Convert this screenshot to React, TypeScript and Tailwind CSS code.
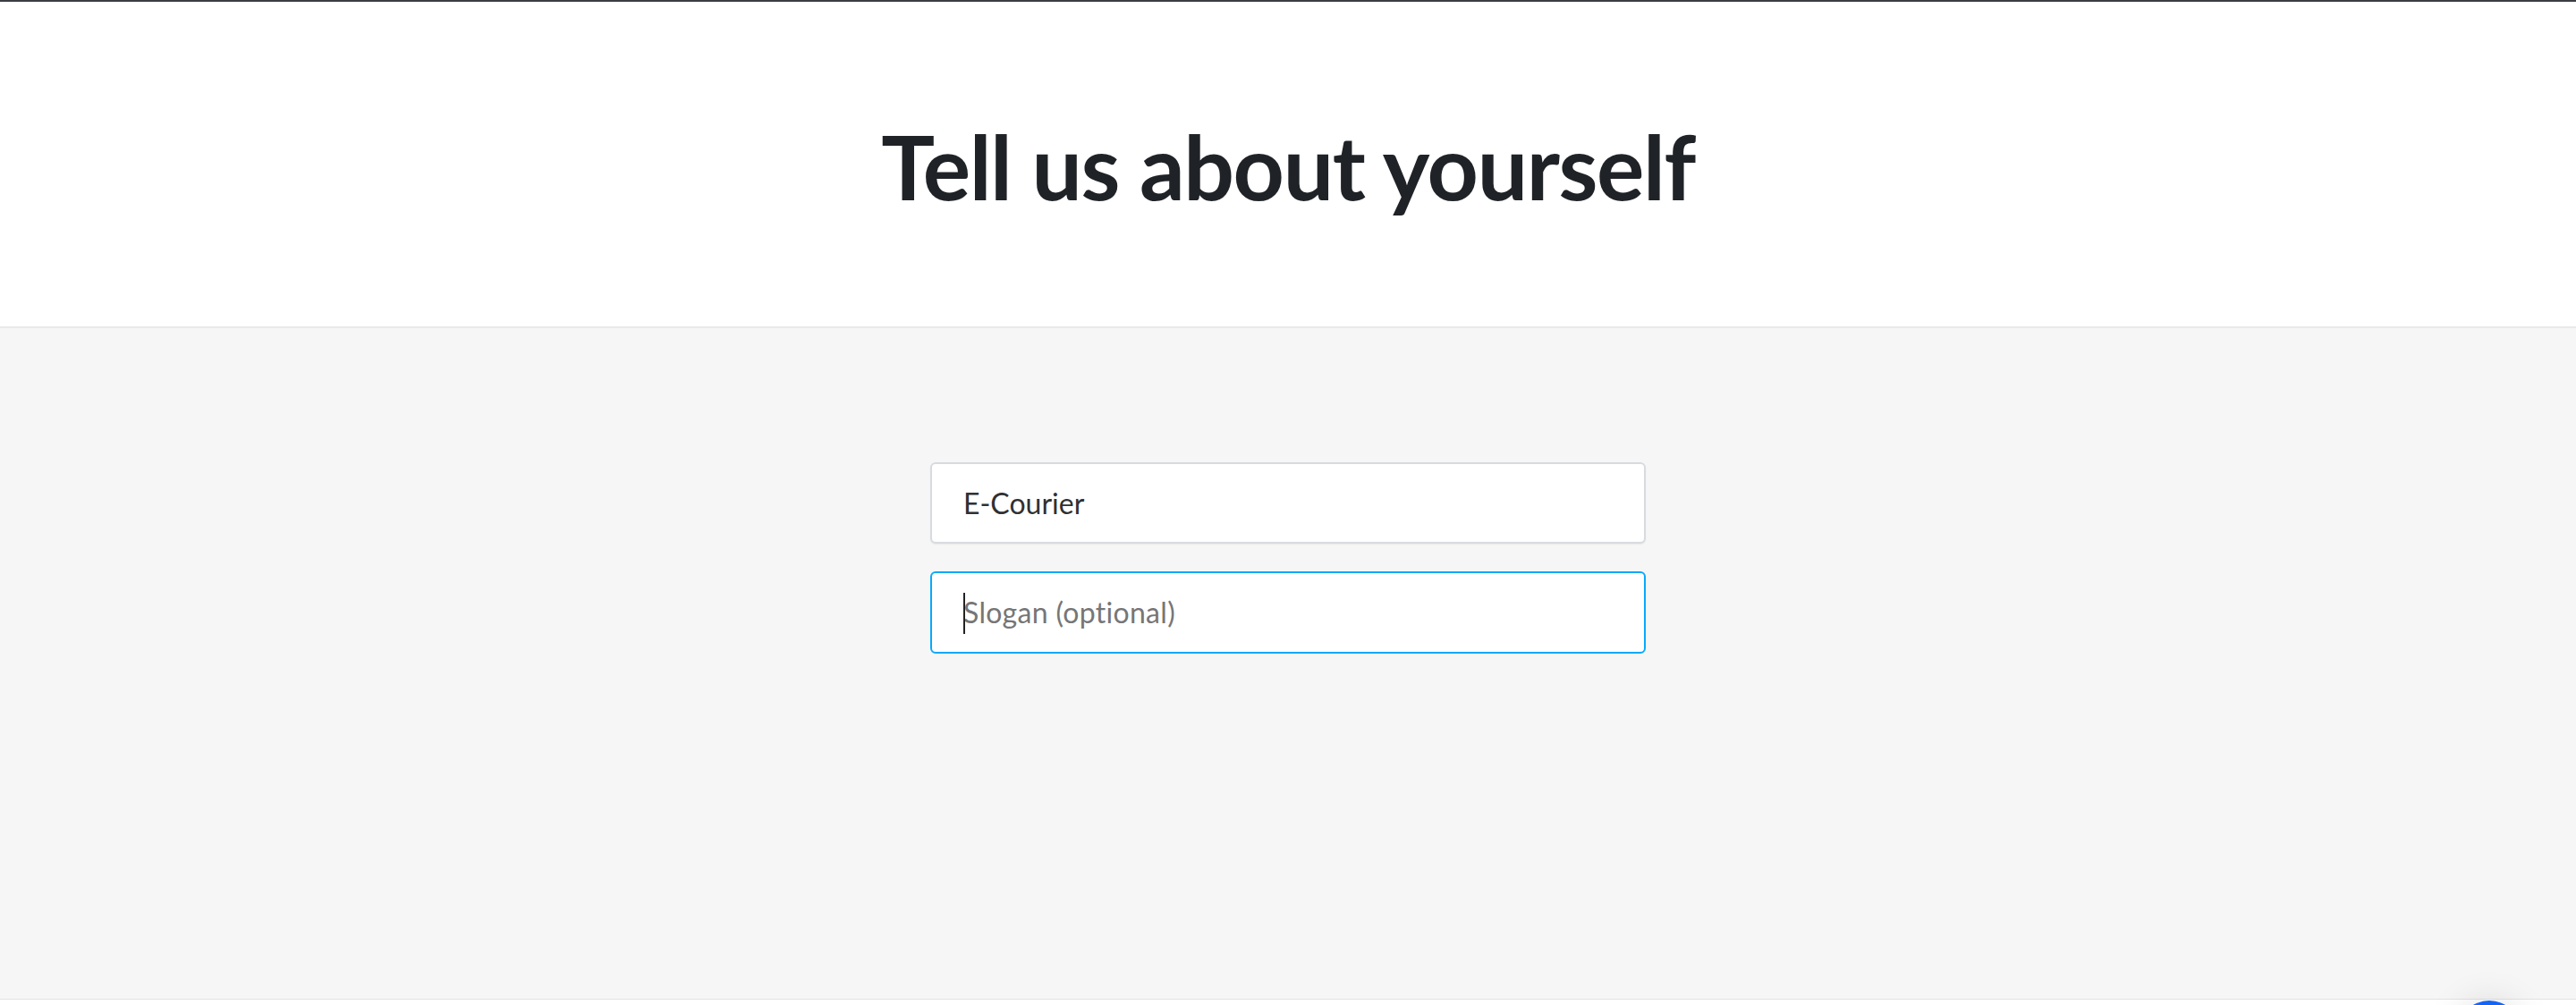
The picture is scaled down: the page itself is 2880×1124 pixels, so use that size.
import React from "react";

export default function App() {
  return (
    <div className="relative flex h-[1124px] w-full flex-col overflow-hidden bg-[#f6f6f6]" style={{ fontFamily: "Lato, 'Noto Sans', sans-serif" }}>
      <div className="h-[2px] w-full bg-[#3a3e43]" />
      <header className="flex h-[365px] items-center justify-center border-b-2 border-[#e9e9e9] bg-white">
        <h1 className="pt-[2px] text-[100px] font-bold leading-none tracking-[-1.4px] text-[#1f2226]" style={{ fontFamily: "Lato, sans-serif" }}>
          Tell us about yourself
        </h1>
      </header>
      <main className="flex flex-1 flex-col items-center pt-[150px]">
        <div className="flex w-[800px] flex-col gap-[31px]">
          <div className="flex h-[91px] items-center rounded-[6px] border-2 border-[#d7dbdf] bg-white px-[35px] shadow-[0_1px_2px_rgba(0,0,0,0.06)]">
            <span className="text-[32px] text-[#2f3133]">E-Courier</span>
          </div>
          <div className="relative flex h-[92px] items-center rounded-[6px] border-2 border-[#08a9fb] bg-white px-[35px]">
            <span className="absolute left-[35px] top-[22px] h-[46px] w-[2px] bg-[#222]" />
            <span className="text-[32px] tracking-[0.3px] text-[#767676]">Slogan (optional)</span>
          </div>
        </div>
      </main>
      <div className="h-[7px] w-full border-t border-[#e2e2e2] bg-white" />
      <div className="absolute left-[2748px] top-[1119px] h-[70px] w-[70px] rounded-full bg-[#1565f5] shadow-[0_0_40px_rgba(0,0,0,0.12)]" />
    </div>
  );
}
